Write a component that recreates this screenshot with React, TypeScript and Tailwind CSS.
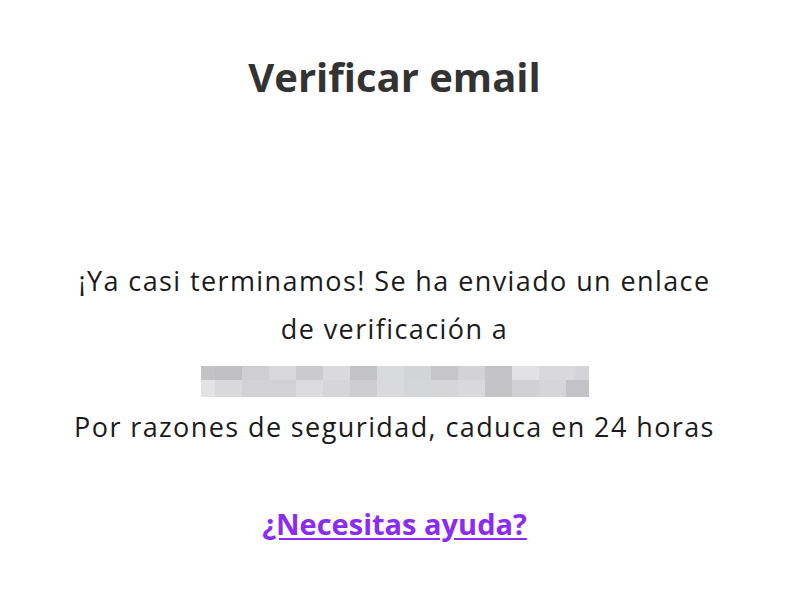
const row1 = [
  "#c3c3c6", "#c0bfc4", "#cfced3", "#d8d8dc", "#cbcbcf", "#dadadc", "#c4c3c8", "#d9dade",
  "#d3d4d8", "#c6c6ca", "#d3d3d7", "#c4c3c8", "#e2e2e6", "#d9d9db", "#d4d4d8",
]
const row2 = [
  "#e3e3e5", "#d9d9db", "#d2d2d6", "#d2d2d6", "#dcdce0", "#d6d6da", "#cecdd1", "#dadade",
  "#d4d5d9", "#d6d6d8", "#d9d9dd", "#c4c4c6", "#d0d0d5", "#d6d6da", "#c3c3c7",
]
const widths1 = [14, 27, 27, 27, 27, 27, 27, 27, 27, 27, 27, 27, 27, 36, 14]
const widths2 = [14, 27, 27, 27, 27, 27, 27, 27, 27, 27, 27, 27, 27, 27, 23]

function BlurredEmail() {
  return (
    <div className="mx-auto flex w-[388px] flex-col">
      <div className="flex h-[14px]">
        {row1.map((c, i) => (
          <div key={i} className="h-full shrink-0" style={{ backgroundColor: c, width: widths1[i] }} />
        ))}
      </div>
      <div className="flex h-[17px]">
        {row2.map((c, i) => (
          <div key={i} className="h-full shrink-0" style={{ backgroundColor: c, width: widths2[i] }} />
        ))}
      </div>
    </div>
  )
}

export default function App() {
  return (
    <div className="min-h-screen bg-white font-['Open_Sans','Noto_Sans',sans-serif] text-center">
      <h1 className="pt-[52px] text-[40px] font-bold leading-[50px] text-[#333333]">Verificar email</h1>
      <div className="mt-[155px] text-[27px] leading-[48px] tracking-[1.4px] text-[#1b1b1b]">
        <p>¡Ya casi terminamos! Se ha enviado un enlace</p>
        <p>de verificación a</p>
        <div className="pt-[13px] pb-[6px]">
          <BlurredEmail />
        </div>
        <p>Por razones de seguridad, caduca en 24 horas</p>
      </div>
      <div className="mt-[51px]">
        <a
          href="#"
          className="text-[29px] font-bold text-[#8b2cf5] underline underline-offset-[3px]"
        >
          ¿Necesitas ayuda?
        </a>
      </div>
    </div>
  )
}
